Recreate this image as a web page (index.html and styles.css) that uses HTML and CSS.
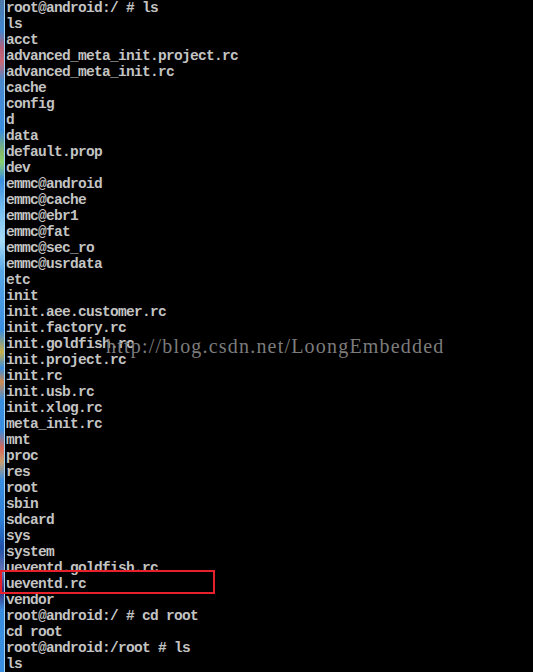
FILE: index.html
```html
<!DOCTYPE html>
<html>
<head>
<meta charset="utf-8">
<link rel="stylesheet" href="styles.css">
</head>
<body>
<div class="screen">
  <div class="edge"></div>
  <pre class="term">root@android:/ # ls
ls
acct
advanced_meta_init.project.rc
advanced_meta_init.rc
cache
config
d
data
default.prop
dev
emmc@android
emmc@cache
emmc@ebr1
emmc@fat
emmc@sec_ro
emmc@usrdata
etc
init
init.aee.customer.rc
init.factory.rc
init.goldfish.rc
init.project.rc
init.rc
init.usb.rc
init.xlog.rc
meta_init.rc
mnt
proc
res
root
sbin
sdcard
sys
system
ueventd.goldfish.rc
ueventd.rc
vendor
root@android:/ # cd root
cd root
root@android:/root # ls
ls</pre>
  <div class="watermark">http://blog.csdn.net/LoongEmbedded</div>
  <div class="highlight"></div>
</div>
</body>
</html>
```

FILE: styles.css
```css
html, body {
  margin: 0;
  padding: 0;
  background: #000;
  overflow: hidden;
}
.screen {
  position: relative;
  display: flex;
  width: 533px;
  height: 672px;
  background: #000;
}
.edge {
  flex: 0 0 4px;
  height: 672px;
  border-right: 1px solid #9fd2f2;
  background: linear-gradient(to bottom,
    #4f79a8 0px, #3f86d0 30px, #b8607a 48px, #c86a78 62px, #4a88cc 80px,
    #3a8ee0 130px, #86b86a 152px, #8ad070 162px, #3a8ee0 180px,
    #78c0f0 210px, #a8dcf8 240px, #5aa8e8 270px, #3a8ee0 330px,
    #c8b048 352px, #3a8ee0 368px, #d08a50 382px, #3a8ee0 400px,
    #3a8ee0 430px, #d86858 448px, #c8a070 462px, #3a8ee0 480px,
    #2f7fd6 520px, #2050a8 548px, #6a78b8 572px, #3a2a78 590px,
    #3a8ee0 610px, #3a8ee0 672px);
}
.term {
  margin: 0;
  padding: 0 0 0 1px;
  font-family: "Liberation Mono", "DejaVu Sans Mono", monospace;
  font-weight: bold;
  font-size: 14.5px;
  letter-spacing: -0.7px;
  line-height: 16px;
  color: #c4c4c4;
  white-space: pre;
}
.watermark {
  position: absolute;
  left: 106px;
  top: 334px;
  font-family: "Liberation Serif", serif;
  font-size: 20px;
  letter-spacing: 1.2px;
  line-height: 24px;
  color: #7c7c7c;
  white-space: nowrap;
}
.highlight {
  position: absolute;
  left: 0;
  top: 570px;
  width: 211px;
  height: 20px;
  border: 2px solid #e8202c;
}
```
